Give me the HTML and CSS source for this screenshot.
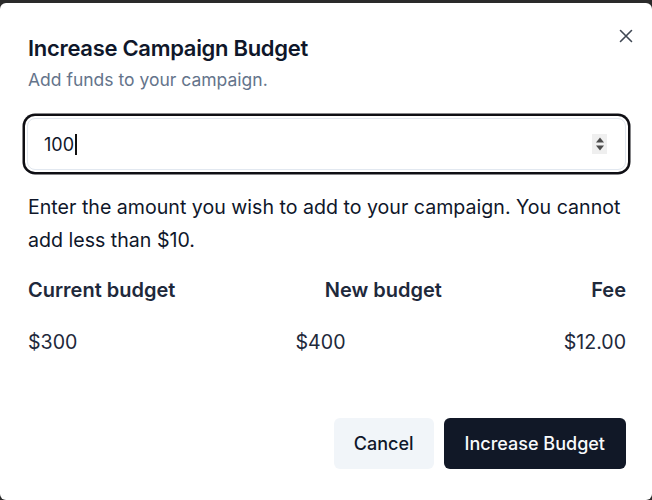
FILE: index.html
```html
<!DOCTYPE html>
<html lang="en">
<head>
  <meta charset="UTF-8">
  <meta name="viewport" content="width=device-width, initial-scale=1.0">
  <title>Increase Campaign Budget</title>
  <link rel="stylesheet" href="styles.css">
</head>
<body>
  <div class="dialog">
    <button class="close-btn" aria-label="Close">
      <svg width="14" height="14" viewBox="0 0 14 14" fill="none" stroke="currentColor" stroke-width="1.6" stroke-linecap="round">
        <path d="M1.5 1.5 L12.5 12.5 M12.5 1.5 L1.5 12.5"/>
      </svg>
    </button>

    <div class="dialog-header">
      <h2 class="dialog-title">Increase Campaign Budget</h2>
      <p class="dialog-desc">Add funds to your campaign.</p>
    </div>

    <div class="amount-field">
      <input class="amount-input" type="number" value="100" min="10">
      <span class="caret"></span>
      <span class="spinner">
        <svg width="10" height="16" viewBox="0 0 10 16" fill="#4b4b4b">
          <path d="M5 1.5 L9 6.5 L1 6.5 Z"/>
          <path d="M1 9.5 L9 9.5 L5 14.5 Z"/>
        </svg>
      </span>
    </div>

    <p class="help-text">Enter the amount you wish to add to your campaign. You cannot add less than $10.</p>

    <div class="summary-row summary-row--head">
      <span>Current budget</span>
      <span>New budget</span>
      <span>Fee</span>
    </div>
    <div class="summary-row">
      <span>$300</span>
      <span>$400</span>
      <span>$12.00</span>
    </div>

    <div class="dialog-footer">
      <button class="btn btn--secondary">Cancel</button>
      <button class="btn btn--primary">Increase Budget</button>
    </div>
  </div>
</body>
</html>
```

FILE: styles.css
```css
html, body {
  height: 100%;
}

body {
  margin: 0;
  padding-top: 3px;
  box-sizing: border-box;
  background: #2a2a2a;
  font-family: Inter, "Noto Sans", sans-serif;
  color: #0f172a;
}

.dialog {
  position: relative;
  height: 100%;
  box-sizing: border-box;
  background: #fff;
  border-radius: 6px;
  padding: 30px 26px 0 28px;
  display: flex;
  flex-direction: column;
}

.close-btn {
  position: absolute;
  top: 26px;
  right: 19px;
  padding: 0;
  border: none;
  background: none;
  color: #1f2937;
  opacity: 0.85;
  width: 14px;
  height: 14px;
  cursor: pointer;
}

.close-btn svg {
  display: block;
}

.dialog-title {
  margin: 0;
  font-size: 22px;
  line-height: 30px;
  font-weight: 600;
  letter-spacing: -0.3px;
}

.dialog-desc {
  margin: 5px 0 0;
  font-size: 17.5px;
  line-height: 24px;
  color: #64748b;
}

.amount-field {
  position: relative;
  margin: 26px 0 0 -1px;
  display: flex;
}

.amount-input {
  flex: 1;
  height: 52px;
  box-sizing: border-box;
  border: 1px solid #e2e8f0;
  border-radius: 8px;
  padding: 0 20px 0 16px;
  font-family: inherit;
  font-size: 18px;
  color: #0f172a;
  background: #fff;
  outline: none;
  box-shadow: 0 0 0 2px #fff, 0 0 0 4.5px #0f0f14;
  -moz-appearance: textfield;
}

.amount-input::-webkit-inner-spin-button,
.amount-input::-webkit-outer-spin-button {
  -webkit-appearance: none;
  margin: 0;
}

.caret {
  position: absolute;
  left: 48px;
  top: 16px;
  width: 1.5px;
  height: 21px;
  background: #111;
}

.spinner {
  position: absolute;
  right: 19px;
  top: 16px;
  width: 15px;
  height: 20px;
  background: #efefef;
  display: flex;
  align-items: center;
  justify-content: center;
}

.spinner svg {
  display: block;
}

.help-text {
  margin: 21px 0 0;
  font-size: 19.6px;
  line-height: 33px;
  color: #0f172a;
}

.summary-row {
  display: flex;
  justify-content: space-between;
  font-size: 19.6px;
  line-height: 28px;
  color: #1e293b;
  margin-top: 24px;
}

.summary-row--head {
  margin-top: 19px;
  font-size: 20px;
  font-weight: 600;
}

.dialog-footer {
  display: flex;
  justify-content: flex-end;
  gap: 10px;
  margin-top: 62px;
}

.btn {
  height: 51px;
  border: none;
  border-radius: 6px;
  padding: 0 21px;
  font-family: inherit;
  font-size: 18px;
  font-weight: 500;
  cursor: pointer;
}

.btn--secondary {
  background: #f1f5f9;
  color: #0f172a;
  padding: 0 20px;
}

.btn--primary {
  background: #111827;
  color: #f8fafc;
}
```
